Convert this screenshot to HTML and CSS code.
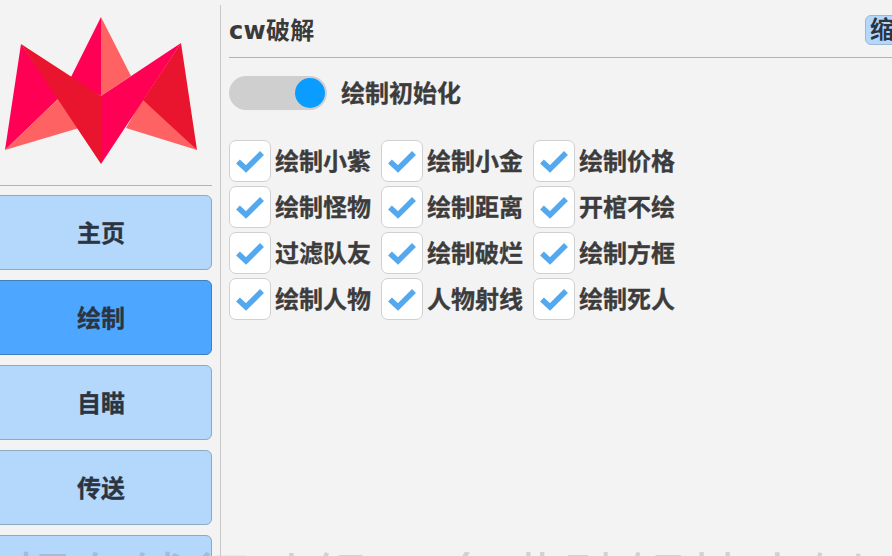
FILE: index.html
```html
<!DOCTYPE html>
<html lang="zh">
<head>
<meta charset="utf-8">
<title>cw破解</title>
<link rel="stylesheet" href="styles.css">
</head>
<body>
<div class="app">
  <aside class="sidebar">
    <div class="logo">
      <svg class="logo-svg" width="202" height="170" viewBox="0 0 202 170" aria-hidden="true">
        <polygon class="pink" points="101,17 70,79 101,96"/>
        <polygon class="salmon" points="101,17 131,76 101,96"/>
        <polygon class="pink" points="21,44 5,150 59,98"/>
        <polygon class="salmon" points="5,150 59,98 79,128"/>
        <polygon class="salmon" points="197,150 143,98 126,128"/>
        <polygon class="red" points="181,43 197,150 143,100"/>
        <polygon class="red" points="21,44 101,96 101,164"/>
        <polygon class="pink" points="181,43 101,96 101,164"/>
      </svg>
    </div>
    <nav class="nav">
      <button class="nav-btn">主页</button>
      <button class="nav-btn active">绘制</button>
      <button class="nav-btn">自瞄</button>
      <button class="nav-btn">传送</button>
      <button class="nav-btn"></button>
    </nav>
  </aside>
  <main class="content">
    <header class="head">
      <h1 class="title">cw破解</h1>
      <button class="shrink">缩小</button>
    </header>
    <div class="switch-row">
      <span class="switch"><span class="knob"></span></span>
      <span class="label">绘制初始化</span>
    </div>
    <div class="checks">
      <label class="check"><span class="box"><svg width="30" height="24" viewBox="0 0 30 24"><path d="M3 12.5 11 20 27 4"/></svg></span><span class="label">绘制小紫</span></label>
      <label class="check"><span class="box"><svg width="30" height="24" viewBox="0 0 30 24"><path d="M3 12.5 11 20 27 4"/></svg></span><span class="label">绘制小金</span></label>
      <label class="check"><span class="box"><svg width="30" height="24" viewBox="0 0 30 24"><path d="M3 12.5 11 20 27 4"/></svg></span><span class="label">绘制价格</span></label>
      <label class="check"><span class="box"><svg width="30" height="24" viewBox="0 0 30 24"><path d="M3 12.5 11 20 27 4"/></svg></span><span class="label">绘制怪物</span></label>
      <label class="check"><span class="box"><svg width="30" height="24" viewBox="0 0 30 24"><path d="M3 12.5 11 20 27 4"/></svg></span><span class="label">绘制距离</span></label>
      <label class="check"><span class="box"><svg width="30" height="24" viewBox="0 0 30 24"><path d="M3 12.5 11 20 27 4"/></svg></span><span class="label">开棺不绘</span></label>
      <label class="check"><span class="box"><svg width="30" height="24" viewBox="0 0 30 24"><path d="M3 12.5 11 20 27 4"/></svg></span><span class="label">过滤队友</span></label>
      <label class="check"><span class="box"><svg width="30" height="24" viewBox="0 0 30 24"><path d="M3 12.5 11 20 27 4"/></svg></span><span class="label">绘制破烂</span></label>
      <label class="check"><span class="box"><svg width="30" height="24" viewBox="0 0 30 24"><path d="M3 12.5 11 20 27 4"/></svg></span><span class="label">绘制方框</span></label>
      <label class="check"><span class="box"><svg width="30" height="24" viewBox="0 0 30 24"><path d="M3 12.5 11 20 27 4"/></svg></span><span class="label">绘制人物</span></label>
      <label class="check"><span class="box"><svg width="30" height="24" viewBox="0 0 30 24"><path d="M3 12.5 11 20 27 4"/></svg></span><span class="label">人物射线</span></label>
      <label class="check"><span class="box"><svg width="30" height="24" viewBox="0 0 30 24"><path d="M3 12.5 11 20 27 4"/></svg></span><span class="label">绘制死人</span></label>
    </div>
  </main>
</div>
<div class="watermark"><span>超有钱行动组</span><span>免费破解禁止倒卖</span></div>
</body>
</html>
```
FILE: styles.css
```css
html, body {
  margin: 0;
  height: 100%;
  overflow: hidden;
  background: #f3f3f3;
  font-family: "Noto Sans CJK SC", "Noto Sans", sans-serif;
  color: #333;
}
.app {
  display: flex;
  width: 892px;
  height: 556px;
  overflow: hidden;
}
.sidebar {
  flex: none;
  width: 220px;
  height: 551px;
  margin-top: 5px;
  border-right: 1px solid #c9c9c9;
  overflow: hidden;
}
.logo {
  width: 212px;
  height: 180px;
  border-bottom: 1px solid #b4b4b4;
  overflow: hidden;
}
.logo-svg {
  display: block;
  margin-top: -5px;
}
.pink { fill: #ff0055; }
.salmon { fill: #ff6262; }
.red { fill: #e9142e; }
.nav {
  display: flex;
  flex-direction: column;
  gap: 10px;
  margin: 9px 0 0 -12px;
}
.nav-btn {
  flex: none;
  width: 224px;
  height: 75px;
  box-sizing: border-box;
  border: 1px solid #8fa9c4;
  border-radius: 6px;
  background: #b4d7fc;
  color: #2b3440;
  font: 700 24px "Noto Sans CJK SC", sans-serif;
  -webkit-text-stroke: 0.3px currentColor;
  padding: 0 0 3px 2px;
}
.nav-btn.active {
  background: #4da6ff;
  border-color: #3f7fbd;
}
.content {
  flex: none;
  width: 671px;
  box-sizing: border-box;
  padding-left: 8px;
  overflow: hidden;
}
.head {
  display: flex;
  align-items: center;
  justify-content: space-between;
  height: 57px;
  border-bottom: 1px solid #b4b4b4;
  width: 700px;
}
.title {
  margin: 5px 0 0;
  font-family: "DejaVu Sans", "Noto Sans CJK SC", sans-serif;
  font-size: 24px;
  line-height: 30px;
  font-weight: 700;
  letter-spacing: 0.3px;
  color: #3a3a3a;
}
.shrink {
  flex: none;
  margin: 3px 0 0 0;
  width: 64px;
  height: 30px;
  box-sizing: border-box;
  border: 1px solid #9db8d4;
  border-radius: 6px;
  background: #b4d7fc;
  color: #2b3440;
  font: 700 24px/24px "Noto Sans CJK SC", sans-serif;
  padding: 0 0 4px 4px;
  text-align: left;
  white-space: nowrap;
  overflow: hidden;
}
.switch-row {
  display: flex;
  align-items: center;
  gap: 14px;
  margin-top: 18px;
  height: 34px;
}
.switch {
  display: flex;
  align-items: center;
  justify-content: flex-end;
  width: 98px;
  height: 34px;
  padding-right: 2px;
  box-sizing: border-box;
  border-radius: 17px;
  background: #cfcfcf;
}
.knob {
  width: 30px;
  height: 30px;
  border-radius: 50%;
  background: #0a9dff;
}
.label {
  font-size: 24px;
  line-height: 34px;
  font-weight: 700;
  color: #3c3c3c;
  -webkit-text-stroke: 0.3px currentColor;
  white-space: nowrap;
  padding-bottom: 2px;
}
.checks {
  display: grid;
  grid-template-columns: repeat(3, 152px);
  grid-auto-rows: 42px;
  row-gap: 4px;
  margin-top: 30px;
}
.check {
  display: flex;
  align-items: center;
  gap: 4px;
}
.box {
  flex: none;
  display: flex;
  align-items: center;
  justify-content: center;
  width: 42px;
  height: 42px;
  box-sizing: border-box;
  border: 1px solid #d0d0d0;
  border-radius: 7px;
  background: #fff;
}
.box path {
  fill: none;
  stroke: #52a9f0;
  stroke-width: 5.5;
}
.watermark {
  position: absolute;
  left: 10px;
  top: 542px;
  display: flex;
  gap: 75px;
  font-size: 60px;
  line-height: 70px;
  font-weight: 400;
  color: rgba(110, 110, 110, 0.25);
  white-space: nowrap;
  pointer-events: none;
}
```
